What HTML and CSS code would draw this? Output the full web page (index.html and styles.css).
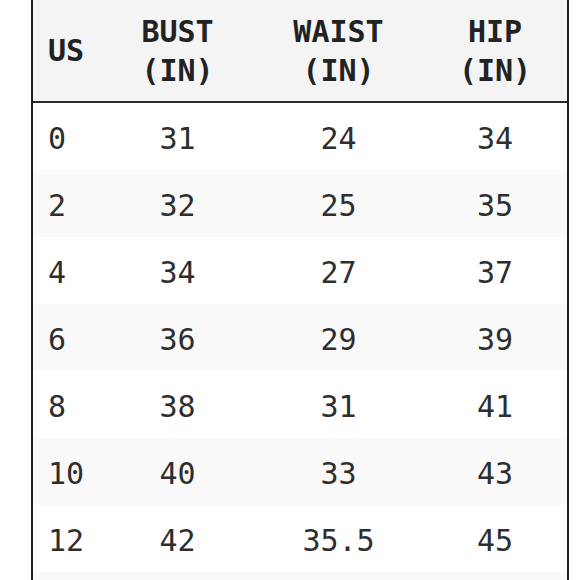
FILE: index.html
```html
<!DOCTYPE html>
<html>
<head>
<meta charset="utf-8">
<link rel="stylesheet" href="styles.css">
</head>
<body>
<div class="wrap">
<table class="size-table">
<colgroup>
<col class="c-us"><col class="c-bust"><col class="c-waist"><col class="c-hip">
</colgroup>
<thead>
<tr>
<th class="left">US</th>
<th>BUST<br>(IN)</th>
<th>WAIST<br>(IN)</th>
<th>HIP<br>(IN)</th>
</tr>
</thead>
<tbody>
<tr><td class="left">0</td><td>31</td><td>24</td><td>34</td></tr>
<tr><td class="left">2</td><td>32</td><td>25</td><td>35</td></tr>
<tr><td class="left">4</td><td>34</td><td>27</td><td>37</td></tr>
<tr><td class="left">6</td><td>36</td><td>29</td><td>39</td></tr>
<tr><td class="left">8</td><td>38</td><td>31</td><td>41</td></tr>
<tr><td class="left">10</td><td>40</td><td>33</td><td>43</td></tr>
<tr><td class="left">12</td><td>42</td><td>35.5</td><td>45</td></tr>
<tr class="peek"><td class="left"></td><td></td><td></td><td></td></tr>
</tbody>
</table>
</div>
</body>
</html>
```
FILE: styles.css
```css
html, body {
  margin: 0;
  padding: 0;
  background: #ffffff;
  overflow: hidden;
}
.wrap {
  padding-left: 31px;
}
.size-table {
  width: 538px;
  table-layout: fixed;
  border-collapse: separate;
  border-spacing: 0;
  border-left: 2px solid #1e1e1e;
  border-right: 2px solid #1e1e1e;
  font-family: "DejaVu Sans Mono", "Liberation Mono", monospace;
  font-size: 30px;
  color: #2e2e2e;
}
.c-us { width: 68px; }
.c-bust { width: 153px; }
.c-waist { width: 169px; }
.c-hip { width: 144px; }
.size-table th {
  height: 101px;
  padding: 0;
  background: #f4f4f4;
  border-bottom: 2px solid #2a2a2a;
  font-weight: bold;
  color: #222222;
  line-height: 39px;
  text-align: center;
  vertical-align: middle;
}
.size-table td {
  height: 63px;
  padding: 4px 0 0 0;
  text-align: center;
  vertical-align: middle;
  line-height: 30px;
}
.size-table .left {
  text-align: left;
  padding-left: 15px;
}
.size-table tbody tr:nth-child(even) td {
  background: #f9f9f9;
}
```
